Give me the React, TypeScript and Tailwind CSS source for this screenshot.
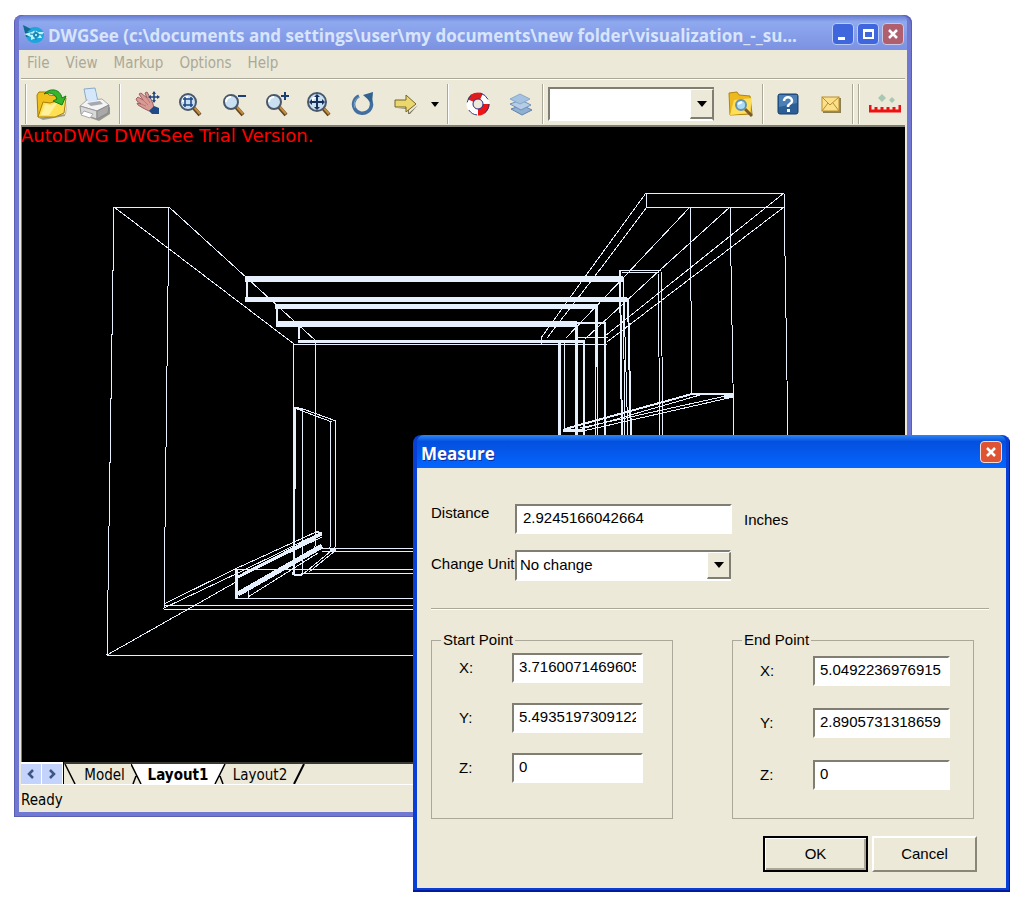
import type { ReactNode } from "react";
import { clsx } from "clsx";

type Line = [number, number, number, number, number?];

// x1, y1, x2, y2, stroke width
const LINES: Line[] = [
  // left wall
  [114, 206, 169, 206],
  [114, 206, 107, 654],
  [169, 206, 164, 608],
  [114, 206, 294, 343],
  [169, 206, 316, 340],
  [294, 343, 293, 574],
  [316, 340, 315, 548],
  // pergola beams
  [245, 278, 623, 278, 6],
  [245, 298, 627, 298, 5],
  [275, 305, 597, 305, 5],
  [276, 323, 577, 323, 6],
  [577, 322, 606, 322, 2],
  [298, 340, 584, 340, 3],
  [294, 343, 607, 343],
  [575, 336, 608, 336],
  [247, 281, 247, 296, 2],
  [277, 308, 277, 320, 2],
  [299, 326, 299, 338, 2],
  // narrow left post
  [294, 407, 303, 408, 2],
  [303, 408, 336, 420],
  [297, 408, 332, 421],
  [295, 408, 294, 574, 2],
  [303, 408, 302, 574],
  [331, 420, 330, 548],
  [336, 420, 335, 548],
  [294, 574, 302, 574, 2],
  [302, 574, 331, 550],
  [309, 571, 335, 550],
  [330, 549, 336, 549, 2],
  // floor
  [107, 654, 500, 654],
  [164, 604, 500, 604],
  [164, 608, 500, 608],
  [235, 568, 500, 568],
  [302, 572, 500, 572],
  [322, 547, 500, 547],
  [322, 550, 500, 550],
  [235, 597, 500, 597],
  [107, 654, 236, 581],
  [164, 603, 235, 568],
  [164, 607, 240, 571],
  [235, 568, 316, 531],
  [240, 571, 322, 531],
  [238, 576, 322, 533, 3],
  [240, 575, 322, 536],
  [238, 593, 322, 545, 5],
  [248, 596, 318, 552],
  [236, 568, 236, 597, 3],
  [248, 590, 248, 597],
  [316, 531, 322, 532, 2],
  // right wall
  [646, 192, 784, 192],
  [647, 206, 784, 206],
  [646, 192, 647, 206],
  [784, 192, 788, 440],
  [646, 192, 587, 273],
  [587, 273, 541, 337],
  [647, 206, 595, 275],
  [595, 275, 547, 337],
  [690, 206, 625, 275],
  [625, 275, 566, 337],
  [730, 206, 660, 269],
  [660, 269, 585, 338],
  [784, 192, 605, 335],
  [784, 206, 607, 341],
  [541, 337, 541, 343],
  [690, 206, 692, 393],
  [730, 206, 734, 440],
  // right posts
  [620, 269, 661, 269],
  [622, 271, 659, 271],
  [620, 269, 622, 440, 2],
  [623, 275, 625, 440],
  [658, 271, 660, 440],
  [661, 269, 663, 440],
  [624, 300, 628, 440],
  [628, 297, 631, 440, 2],
  [596, 303, 596, 366, 3],
  [595, 366, 595, 440],
  [597, 366, 597, 440],
  [605, 322, 605, 440, 2],
  [576, 326, 576, 440, 3],
  [584, 339, 584, 440, 2],
  [559, 341, 559, 440, 3],
  [564, 341, 564, 429, 1],
  // shelf
  [692, 393, 733, 393, 2],
  [724, 395, 733, 395, 3],
  [565, 428, 692, 393, 2],
  [575, 430, 700, 394],
  [580, 427, 726, 395],
  [583, 430, 733, 396],
  [563, 429, 585, 429, 3],
];

function Wireframe() {
  return (
    <svg className="block h-full w-full" shapeRendering="crispEdges" aria-hidden="true">
      <g transform="translate(-22 -126)" stroke="#e6effc">
        {LINES.map(([x1, y1, x2, y2, w], i) => (
          <line key={i} x1={x1} y1={y1} x2={x2} y2={y2} strokeWidth={w ?? 1} />
        ))}
      </g>
    </svg>
  );
}

function OpenIcon() {
  return (
    <svg width="34" height="34" viewBox="0 0 34 34">
      <path d="M4 31 L31 27 L32 15 L30 29 L8 33z" fill="#6d6a58" opacity=".6" />
      <path d="M2 8 L4 5 L11 5 L14 8 L22 9 L22 28 L3 30z" fill="#f2c01c" stroke="#a37a08" />
      <path d="M3 30 L8 15 L15 16 L31 11 L29 26 L20 30z" fill="#ffe052" stroke="#a87f0c" />
      <path d="M6 28 L10 17 L16 18 L23 15 L14 28z" fill="#fff09a" />
      <path d="M9 7 C14 1 25 1 27 11 L31 9 L27 18 L18 14 L22 12 C20 6 14 5 9 7z" fill="#35b62c" stroke="#147a14" />
    </svg>
  );
}

function PrintIcon() {
  return (
    <svg width="34" height="34" viewBox="0 0 34 34">
      <path d="M4 28 L21 34 L32 27 L32 20z" fill="#5e5e5e" opacity=".6" />
      <path d="M6 2 L17 1 L20 15 L9 17z" fill="#d4e7fb" stroke="#8aa9cb" />
      <path d="M2 19 L9 13 L24 12 L31 18 L19 24z" fill="#f4f4f4" stroke="#aaa" />
      <path d="M2 19 L19 24 L19 32 L3 27z" fill="#d9d9d9" stroke="#999" />
      <path d="M19 24 L31 18 L30 26 L19 32z" fill="#a9a9a9" stroke="#8a8a8a" />
      <path d="M9 16 L22 14 L25 17 L13 19z" fill="#a6aaae" />
      <path d="M8 4 L17 3 L19 14 L10 15z" fill="#d4e7fb" />
      <path d="M6 24 L15 27 L12 31 L3 28z" fill="#fff" stroke="#aaa" />
    </svg>
  );
}

function HandIcon() {
  return (
    <svg width="26" height="26" viewBox="0 0 26 26">
      <path
        d="M1 8 L3 6 L8 9 L4 3 L6 2 L12 7 L10 2 L12 1 L16 8 L18 13 L19 17 L14 20 L8 17 L3 14 L2 12 L6 13 L2 10z"
        fill="#d99a94"
        stroke="#9c6163"
      />
      <path d="M8 9 L13 14 M12 7 L15 12 M6 13 L11 15" stroke="#b8797b" fill="none" />
      <path d="M14 20 L19 15 L24 17 L24 23 L17 23z" fill="#1f4a86" />
      <path d="M19 1 V11 M14 6 H24" stroke="#24457e" strokeWidth="1.6" />
      <path d="M19 0 L21 3 H17z M19 12 L21 9 H17z M13 6 L16 4 V8z M25 6 L22 4 V8z" fill="#24457e" />
    </svg>
  );
}

function Lens({ children, size = 8 }: { children?: ReactNode; size?: number }) {
  return (
    <svg width="26" height="26" viewBox="0 0 26 26">
      <path d="M15 16 L22 24" stroke="#5e4322" strokeWidth="4" />
      <path d="M15 15 L22 23" stroke="#c58c3d" strokeWidth="2" />
      <circle cx="10" cy="11" r={size} fill="#c9e0f2" stroke="#49586c" strokeWidth="2" />
      <path d="M5 11 C5 8 7 6 10 6" stroke="#fff" strokeWidth="2" fill="none" />
      {children}
    </svg>
  );
}

function RotateIcon() {
  return (
    <svg width="24" height="26" viewBox="0 0 24 26">
      <path d="M8 5 A9 9 0 1 0 18 7" fill="none" stroke="#426f9f" strokeWidth="3.5" />
      <path d="M8 6 A8 8 0 0 0 4 17" fill="none" stroke="#7fa5ca" />
      <path d="M12 4 L22 1 L21 12z" fill="#32628f" />
    </svg>
  );
}

function ArrowIcon() {
  return (
    <svg width="24" height="22" viewBox="0 0 24 22">
      <path d="M3 15 H15 V20 L24 12 L16 21 H14 V16z" fill="#7a7663" />
      <path d="M1 7 H12 V2 L22 11 L12 19 V14 H1z" fill="#ecd76f" stroke="#6f652d" />
    </svg>
  );
}

function BuoyIcon() {
  return (
    <svg width="24" height="24" viewBox="0 0 24 24">
      <circle cx="12" cy="12" r="8" fill="none" stroke="#fff" strokeWidth="7" />
      <path d="M12 4 A8 8 0 0 0 4 12" fill="none" stroke="#e01b1b" strokeWidth="7" transform="rotate(25 12 12)" />
      <path d="M20 12 A8 8 0 0 1 12 20" fill="none" stroke="#f01414" strokeWidth="7" />
      <circle cx="12" cy="12" r="11" fill="none" stroke="#34346e" strokeDasharray="10 8" />
      <circle cx="12" cy="12" r="5" fill="#eceadb" stroke="#2b2b88" />
      <path d="M4 3 L9 1 L12 6 L7 8z" fill="#e01b1b" />
    </svg>
  );
}

function LayersIcon() {
  return (
    <svg width="26" height="24" viewBox="0 0 26 24">
      <path d="M3 17 L14 13 L24 18 L14 23z" fill="#8fb0d3" stroke="#6283ac" />
      <path d="M2 12 L13 8 L23 13 L13 18z" fill="#b5cde6" stroke="#6f90b7" />
      <path d="M2 7 L12 2 L22 7 L12 12z" fill="#a5c3e0" stroke="#88a8ca" />
    </svg>
  );
}

function FindFolderIcon() {
  return (
    <svg width="26" height="28" viewBox="0 0 26 28">
      <path d="M1 3 L9 2 L11 5 L22 6 L24 24 L2 25z" fill="#eeb91d" stroke="#b4830c" />
      <path d="M2 25 L6 10 L24 8 L22 23z" fill="#ffdf57" />
      <path d="M17 19 L24 26" stroke="#7a5a2c" strokeWidth="3" />
      <circle cx="13" cy="15" r="5" fill="#a8dcf4" stroke="#6993ad" strokeWidth="2" />
      <path d="M10 14 L14 12" stroke="#fff" strokeWidth="2" />
    </svg>
  );
}

function HelpIcon() {
  return (
    <svg width="22" height="22" viewBox="0 0 22 22">
      <rect x="1" y="1" width="20" height="20" rx="2" fill="#2b5f96" stroke="#163f70" />
      <path d="M2 2 H20 V10 L2 14z" fill="#4a80b5" />
      <path d="M7 8 C7 3 15 3 15 8 C15 11 11 10 11 14" fill="none" stroke="#fff" strokeWidth="2.5" />
      <rect x="10" y="16" width="3" height="3" fill="#fff" />
    </svg>
  );
}

function MailIcon() {
  return (
    <svg width="20" height="17" viewBox="0 0 20 17">
      <rect x="2" y="2" width="18" height="15" fill="#8c7f53" />
      <rect x="1" y="1" width="17" height="14" fill="#fbe089" stroke="#b78f2e" />
      <path d="M1 1 L9 9 L18 1 M1 15 L7 7 M18 15 L12 7" fill="none" stroke="#b78f2e" />
    </svg>
  );
}

function RulerIcon() {
  return (
    <svg width="32" height="20" viewBox="0 0 32 20">
      <path d="M1 11 V17 H31 V11 M7 13 V18 M13 13 V18 M19 13 V18 M25 13 V18" fill="none" stroke="#ee1111" strokeWidth="3" />
      <path d="M13 0 L17 4 L13 8 L9 4z M23 3 L26 6 L23 9 L20 6z" fill="#a9c8b2" />
    </svg>
  );
}

function AppIcon() {
  return (
    <svg width="24" height="22" viewBox="0 0 24 22" className="shrink-0">
      <ellipse cx="13" cy="12" rx="9" ry="8" fill="#1ba6dc" />
      <path d="M1 2 L9 6 L5 9 L13 12 L4 14z" fill="#13688f" />
      <path d="M2 11 L10 9 L13 7 L16 9 L22 9 L19 13 L20 15 L14 15 L9 17 L9 14z" fill="#b9f2fb" />
      <path d="M8 11 L20 12 M13 7 L14 17" stroke="#1579a8" />
      <circle cx="14" cy="12" r="3" fill="#1987b9" />
      <circle cx="14" cy="12" r="1" fill="#d8fbff" />
    </svg>
  );
}

function CloseGlyph() {
  return (
    <svg width="14" height="14" viewBox="0 0 14 14" aria-hidden="true">
      <path d="M3 3 L11 11 M11 3 L3 11" stroke="#fff" strokeWidth="2.5" />
    </svg>
  );
}

function ToolButton({ label, children }: { label: string; children: ReactNode }) {
  return (
    <button type="button" aria-label={label} className="flex w-[43px] shrink-0 items-center justify-center">
      {children}
    </button>
  );
}

function Separator() {
  return <div className="h-10 w-[2px] shrink-0 border-l border-r border-l-[#aca899] border-r-white" />;
}

const CAPTION_BUTTON = "flex size-[22px] items-center justify-center rounded-[4px] border";
const SUNKEN = "border-2 border-t-[#807e72] border-l-[#807e72] border-r-white border-b-white bg-white";

function DropArrow() {
  return (
    <span className="pointer-events-none absolute inset-y-[2px] right-0 flex w-6 items-center justify-center border-t border-r-2 border-b-2 border-l border-t-white border-r-[#807e72] border-b-[#807e72] border-l-white bg-[#ece9d8]">
      <svg width="10" height="6" viewBox="0 0 10 6">
        <path d="M0 0 H10 L5 6z" fill="#000" />
      </svg>
    </span>
  );
}

function Toolbar() {
  return (
    <div className="flex h-[46px] shrink-0 items-center overflow-hidden border-t border-white pt-[3px] pl-1">
      <Separator />
      <div className="ml-[3px] flex">
        <ToolButton label="Open"><OpenIcon /></ToolButton>
        <ToolButton label="Print"><PrintIcon /></ToolButton>
      </div>
      <div className="ml-[3px]"><Separator /></div>
      <div className="ml-[5px] flex">
        <ToolButton label="Pan"><HandIcon /></ToolButton>
        <ToolButton label="Zoom window">
          <Lens><path d="M7 6 V16 M13 6 V16 M5 8 H15 M5 14 H15" stroke="#1c4684" strokeWidth="1.5" /></Lens>
        </ToolButton>
        <ToolButton label="Zoom out">
          <Lens size={7}><path d="M17 5 H25" stroke="#1c3f78" strokeWidth="2" /></Lens>
        </ToolButton>
        <ToolButton label="Zoom in">
          <Lens size={7}><path d="M17 5 H25 M21 1 V9" stroke="#1c3f78" strokeWidth="2" /></Lens>
        </ToolButton>
        <ToolButton label="Zoom extents">
          <Lens size={9}>
            <path d="M10 5 V17 M4 11 H16" stroke="#17315c" strokeWidth="2" />
            <path d="M10 3 L13 6 H7z M10 19 L13 16 H7z M2 11 L5 8 V14z M18 11 L15 8 V14z" fill="#17315c" />
          </Lens>
        </ToolButton>
        <ToolButton label="Rotate"><RotateIcon /></ToolButton>
        <ToolButton label="Next"><ArrowIcon /></ToolButton>
        <button type="button" aria-label="More views" className="flex w-4 items-center justify-center">
          <svg width="8" height="5" viewBox="0 0 8 5"><path d="M0 0 H8 L4 5z" /></svg>
        </button>
      </div>
      <div className="ml-1"><Separator /></div>
      <div className="ml-[7px] flex">
        <ToolButton label="Background"><BuoyIcon /></ToolButton>
        <ToolButton label="Layers"><LayersIcon /></ToolButton>
      </div>
      <Separator />
      <div className="relative ml-1 h-[34px] w-[166px] shrink-0">
        <select
          aria-label="Layer"
          className="h-full w-full appearance-none border-2 border-t-[#807e72] border-r-[#807e72] border-b-white border-l-[#807e72] bg-white"
        />
        <DropArrow />
      </div>
      <div className="ml-[5px] flex">
        <ToolButton label="Find file"><FindFolderIcon /></ToolButton>
      </div>
      <Separator />
      <div className="ml-[2px] flex">
        <ToolButton label="Help"><HelpIcon /></ToolButton>
        <ToolButton label="Send mail"><MailIcon /></ToolButton>
      </div>
      <div className="flex gap-1">
        <Separator />
        <Separator />
      </div>
      <div className="ml-[3px] flex">
        <ToolButton label="Measure distance"><RulerIcon /></ToolButton>
      </div>
    </div>
  );
}

function LayoutTabs() {
  return (
    <div className="flex h-[23px] shrink-0 border-b border-white text-[15px] leading-[22px]">
      <div className="flex gap-px border-r border-black bg-white pt-[2px] pr-px">
        {["M6 1 L2 5 L6 9", "M2 1 L6 5 L2 9"].map((d, i) => (
          <button
            key={d}
            type="button"
            aria-label={i === 0 ? "Previous layout" : "Next layout"}
            className="flex w-5 items-center justify-center bg-[#c3d3fb]"
          >
            <svg width="8" height="10" viewBox="0 0 8 10"><path d={d} fill="none" stroke="#3d5583" strokeWidth="2.5" /></svg>
          </button>
        ))}
      </div>
      <div className="flex flex-1 border-t-2 border-[#3a3a34]" role="tablist">
        <svg width="14" height="20" viewBox="0 0 14 20"><path d="M1 0 L11 20" stroke="#000" strokeWidth="1.5" /></svg>
        <button type="button" role="tab" aria-selected="false" className="w-[53px] text-center">Model</button>
        <svg width="14" height="20" viewBox="0 0 14 20">
          <path d="M0 -2 H14 V20 H10z" fill="#fff" />
          <path d="M0 0 L10 20 M5 12 L2 20" fill="none" stroke="#000" strokeWidth="1.5" />
        </svg>
        <button type="button" role="tab" aria-selected="true" className="w-[66px] bg-white text-center font-bold">Layout1</button>
        <svg width="16" height="20" viewBox="0 0 16 20">
          <path d="M0 -2 H15 L5 20 H0z" fill="#fff" />
          <path d="M14 0 L4 20 M9 12 L12 20" fill="none" stroke="#000" strokeWidth="1.5" />
        </svg>
        <button type="button" role="tab" aria-selected="false" className="w-[66px] text-center">Layout2</button>
        <svg width="12" height="20" viewBox="0 0 12 20"><path d="M11 0 L1 20" stroke="#000" strokeWidth="2" /></svg>
      </div>
    </div>
  );
}

function ViewerWindow() {
  return (
    <section className="flex min-h-0 flex-1 flex-col rounded-t-[8px] bg-[#7078d2] px-[5px] pb-[5px] shadow-[inset_1px_-1px_0_#5a5fb4,inset_-1px_1px_0_#5a5fb4]">
      <header className="flex h-[35px] shrink-0 items-center gap-[2px] rounded-t-[6px] bg-linear-to-b from-[#6479cf] via-[#8fa9ef] via-20% to-[#7c92e2] pt-[3px] pr-[3px] pl-[3px]">
        <AppIcon />
        <h1 className="min-w-0 flex-1 overflow-hidden pt-[3px] font-['Open_Sans',sans-serif] text-[17px] leading-6 font-bold whitespace-nowrap text-[#d8e4fa]">
          {"DWGSee (c:\\documents and settings\\user\\my documents\\new folder\\visualization_-_su..."}
        </h1>
        <div className="flex gap-[3px]">
          <button type="button" aria-label="Minimize" className={clsx(CAPTION_BUTTON, "border-[#b9cbf8] bg-[#3f66dc]")}>
            <span className="mt-2 mr-1 h-[3px] w-[7px] bg-white" />
          </button>
          <button type="button" aria-label="Maximize" className={clsx(CAPTION_BUTTON, "border-[#b9cbf8] bg-[#3f66dc]")}>
            <span className="h-[10px] w-[11px] border-2 border-t-[3px] border-white" />
          </button>
          <button type="button" aria-label="Close viewer" className={clsx(CAPTION_BUTTON, "border-[#c9c6e6] bg-[#b05f6e]")}>
            <CloseGlyph />
          </button>
        </div>
      </header>

      <div className="flex min-h-0 flex-1 flex-col bg-[#ece9d8] px-[2px]">
        <nav className="flex h-[29px] shrink-0 items-center gap-4 border-b border-[#aca899] pb-px pl-[6px] text-[15px] text-[#aba897]">
          {["File", "View", "Markup", "Options", "Help"].map((item) => (
            <button key={item} type="button">{item}</button>
          ))}
        </nav>
        <Toolbar />
        <div className="relative min-h-0 flex-1 overflow-hidden border-t-2 border-l border-[#807e72] bg-black">
          <Wireframe />
          <p className="absolute top-0 -left-px font-['DejaVu_Sans',sans-serif] text-[18px] leading-[18px] whitespace-nowrap text-[#f00]">
            AutoDWG DWGSee Trial Version.
          </p>
        </div>
        <LayoutTabs />
        <footer className="h-[27px] shrink-0 text-[15px] leading-[31px]">Ready</footer>
      </div>
    </section>
  );
}

type Point = { x: string; y: string; z: string };

function PointGroup({ title, id, point, wide }: { title: string; id: string; point: Point; wide?: boolean }) {
  return (
    <fieldset className="h-[188px] w-[242px] border border-[#aca899] pl-6">
      <legend className="-ml-[15px] px-[2px] leading-[18px]">{title}</legend>
      <div className={clsx("flex flex-col", wide ? "gap-[22px] pt-[7px]" : "gap-5 pt-1")}>
        {(["x", "y", "z"] as const).map((axis) => (
          <div key={axis} className="flex items-center">
            <label htmlFor={`${id}-${axis}`} className="w-14 pl-[3px]">
              {axis.toUpperCase()}:
            </label>
            <input
              id={`${id}-${axis}`}
              defaultValue={point[axis]}
              className={clsx(SUNKEN, "h-[30px] px-[5px] pb-[3px]", wide ? "w-[137px]" : "w-[131px]")}
            />
          </div>
        ))}
      </div>
    </fieldset>
  );
}

function MeasureDialog() {
  return (
    <section
      role="dialog"
      aria-labelledby="measure-title"
      className="absolute top-[435px] right-[10px] w-[597px] rounded-t-[8px] bg-[#0a3fd6] px-1 pb-1 font-['Liberation_Sans',Arial,sans-serif] text-[15px] leading-[18px] shadow-[inset_-1px_-2px_0_#001a9c]"
    >
      <header className="flex h-[33px] items-center justify-between rounded-t-[7px] bg-linear-to-b from-[#2f86f6] via-[#0450de] via-20% to-[#0566ff] pt-px pr-1 pl-1">
        <h2 id="measure-title" className="pt-1 font-['Open_Sans',sans-serif] text-[17px] font-bold text-white [text-shadow:1px_1px_0_#0a2f9c]">
          Measure
        </h2>
        <button type="button" aria-label="Close" className={clsx(CAPTION_BUTTON, "border-[#f4dcd4] bg-[#dd5334]")}>
          <CloseGlyph />
        </button>
      </header>

      <form className="bg-[#ece9d8] pt-9 pr-4 pb-4 pl-[14px]" onSubmit={(e) => e.preventDefault()}>
        <div className="flex">
          <label htmlFor="distance" className="w-[84px]">Distance</label>
          <input id="distance" defaultValue="2.9245166042664" className={clsx(SUNKEN, "h-[30px] w-[217px] px-[6px] pb-[3px]")} />
          <span className="pt-[7px] pl-3">Inches</span>
        </div>
        <div className="mt-4 flex">
          <label htmlFor="unit" className="w-[84px] pt-[5px] whitespace-nowrap">Change Unit</label>
          <div className="relative h-[31px] w-[216px]">
            <select id="unit" className={clsx(SUNKEN, "h-full w-full appearance-none pb-[2px] pl-[3px]")}>
              <option>No change</option>
            </select>
            <DropArrow />
          </div>
        </div>

        <hr className="mt-[27px] mr-px border-t border-b border-t-[#aca899] border-b-white" />

        <div className="mt-[21px] flex gap-[59px]">
          <PointGroup title="Start Point" id="start" point={{ x: "3.7160071469605", y: "5.4935197309122", z: "0" }} />
          <PointGroup title="End Point" id="end" point={{ x: "5.0492236976915", y: "2.8905731318659", z: "0" }} wide />
        </div>

        <div className="mt-[17px] mr-[13px] flex justify-end gap-1">
          <button type="submit" className="h-9 w-[105px] border-2 border-black bg-[#ece9d8] shadow-[inset_1px_1px_0_#fff,inset_-2px_-2px_0_#aca899]">
            OK
          </button>
          <button type="button" className="h-9 w-[105px] border-2 border-t-white border-r-[#8a8778] border-b-[#8a8778] border-l-white bg-[#ece9d8]">
            Cancel
          </button>
        </div>
      </form>
    </section>
  );
}

export default function App() {
  return (
    <main className="relative flex h-screen min-h-[900px] flex-col bg-white pt-[15px] pr-[108px] pb-[92px] pl-[14px] font-['DejaVu_Sans_Condensed','DejaVu_Sans',sans-serif] text-black">
      <ViewerWindow />
      <MeasureDialog />
    </main>
  );
}
